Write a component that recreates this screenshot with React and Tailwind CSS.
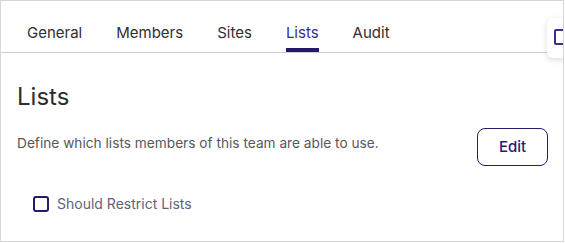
import React from 'react';

const TABS = ['General', 'Members', 'Sites', 'Lists', 'Audit'];

const App = () => {
  const active = 'Lists';

  return (
    <div className="bg-white w-[565px] h-[243px]" style={{ fontFamily: 'Inter, "Noto Sans", sans-serif' }}>
      <div className="relative w-[564px] h-[242px] border border-[#d6d6d6] overflow-hidden">
        {/* Tabs */}
        <nav className="flex pl-[22px] gap-[26px] border-b border-[#cdcdd2] h-[52px]">
          {TABS.map((tab) => (
            <button
              key={tab}
              className={`flex flex-col px-[4px] pt-[20px] text-[15px] leading-[24px] ${
                tab === active ? 'text-[#3a2d86]' : 'text-[#2e2e33]'
              }`}
            >
              <span>{tab}</span>
              <span className={`mt-[3px] h-[4px] w-full ${tab === active ? 'bg-[#27176b]' : 'bg-transparent'}`}></span>
            </button>
          ))}
        </nav>

        {/* Floating toolbar card, clipped at the edge */}
        <div className="absolute left-[546px] top-[17px] w-[40px] h-[40px] bg-white rounded-md shadow-[0_2px_6px_rgba(0,0,0,0.15)]">
          <div className="absolute left-[7px] top-[11px] w-[16px] h-[16px] border-2 border-[#3b2d86] rounded-[2px]"></div>
        </div>

        {/* Content */}
        <section className="px-[16px] pt-[28px]">
          <h2 className="text-[24px] leading-[32px] font-normal text-[#2b2b30]">Lists</h2>
          <div className="flex items-start justify-between mt-[14px]">
            <p className="text-[13.7px] leading-[20px] text-[#55575f] pt-[6px]">
              Define which lists members of this team are able to use.
            </p>
            <button className="w-[71px] h-[38px] mr-[-1px] mt-[1px] border border-[#2a1a6e] rounded-[8px] text-[15px] font-medium text-[#2a1a6e]">
              Edit
            </button>
          </div>
          <label className="flex items-center gap-[8px] ml-[16px] mt-[28px] text-[14px] leading-[20px] text-[#62627a]">
            <span className="w-[16px] h-[16px] border-2 border-[#2a1a6e] rounded-[3px]"></span>
            Should Restrict Lists
          </label>
        </section>
      </div>
    </div>
  );
};

export default App;
